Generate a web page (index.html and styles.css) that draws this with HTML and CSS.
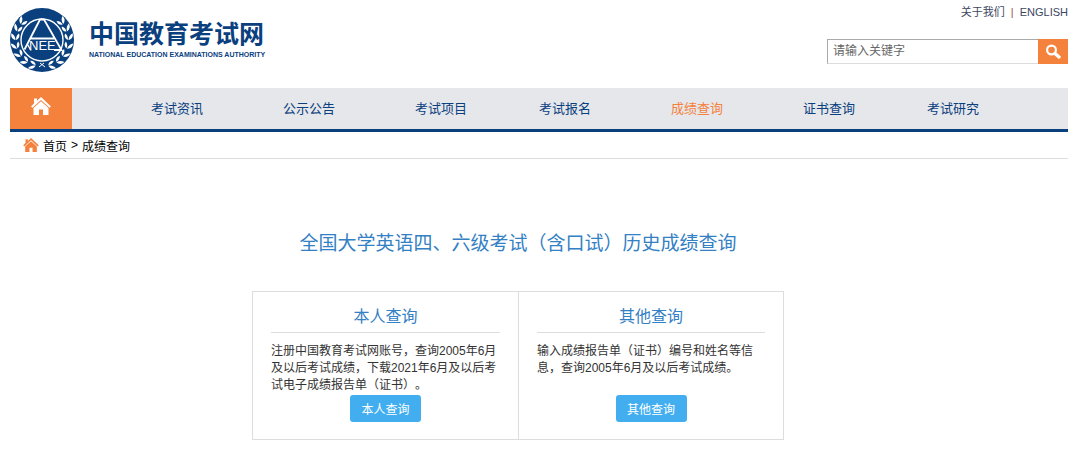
FILE: index.html
```
<!DOCTYPE html>
<html lang="zh-CN">
<head>
    <meta charset="UTF-8">
    <meta name="viewport" content="width=device-width, initial-scale=1.0">
    <title>中国教育考试网 - 成绩查询</title>
    <link rel="stylesheet" href="styles.css">
</head>
<body>

    <header class="header">
        <a class="logo" href="#">
            <svg class="emblem" viewBox="0 0 64 64" aria-hidden="true">
                <defs>
                    <g id="leaf">
                        <path d="M0 0C-3.400 -.8 -4.800 -3.500 -4.200 -6.800C-1.600 -5.400 0 -3 0 0Z"/>
                        <path d="M.6 0C3.600 -1.200 4.600 -3.800 3.400 -6.400C1.200 -4.800 .4 -2.800 .6 0Z"/>
                    </g>
                    <g id="branch" fill="#fff">
                        <use href="#leaf" transform="rotate(14 32 32) translate(32 58.500) rotate(-90)"/>
                        <use href="#leaf" transform="rotate(33 32 32) translate(32 58.500) rotate(-90)"/>
                        <use href="#leaf" transform="rotate(52 32 32) translate(32 58.500) rotate(-90)"/>
                        <use href="#leaf" transform="rotate(71 32 32) translate(32 58.500) rotate(-90)"/>
                        <use href="#leaf" transform="rotate(90 32 32) translate(32 58.500) rotate(-90)"/>
                        <use href="#leaf" transform="rotate(109 32 32) translate(32 58.500) rotate(-90)"/>
                        <use href="#leaf" transform="rotate(127 32 32) translate(32 58.500) rotate(-90)"/>
                    </g>
                </defs>
                <circle cx="32" cy="32" r="32" fill="#0a407e"/>
                <use href="#branch"/>
                <use href="#branch" transform="translate(64 0) scale(-1 1)"/>
                <path d="M29 59l5-4M35 59l-5-4" stroke="#fff" stroke-width="1"/>
                <circle cx="32" cy="32" r="21" fill="#0a407e" stroke="#fff" stroke-width="1.4"/>
                <path d="M14.500 41.500L30 11.500h4L51.500 42H44M20 30.500h24" fill="none" stroke="#fff" stroke-width="1.8"/>
                <path d="M17.500 36.500l3.500 6" stroke="#fff" stroke-width="1.4"/>
                <text class="emblem-text" x="19" y="42">NEE</text>
            </svg>
            <span class="logo-words">
                <span class="logo-name">中国教育考试网</span>
                <span class="logo-sub">NATIONAL EDUCATION EXAMINATIONS AUTHORITY</span>
            </span>
        </a>
        <div class="header-right">
            <div class="top-links">
                <a href="#">关于我们</a>
                <span class="divider">|</span>
                <a href="#">ENGLISH</a>
            </div>
            <form class="search">
                <input type="text" placeholder="请输入关键字" aria-label="请输入关键字">
                <button type="button" aria-label="搜索">
                    <svg viewBox="0 0 16 16" aria-hidden="true">
                        <circle cx="6.500" cy="6" r="4.400" fill="none" stroke="#fff" stroke-width="2.200"/>
                        <path d="M10 9.500l4 3.500" stroke="#fff" stroke-width="3.400" stroke-linecap="round"/>
                    </svg>
                </button>
            </form>
        </div>
    </header>

    <nav class="nav">
        <a class="nav-home" href="#" aria-label="首页">
            <svg viewBox="0 0 20 18" aria-hidden="true">
                <path d="M10 0L6 3.700V1.500H3v5L0 9.400l1.500 1.400L10 3l8.500 7.800L20 9.400z"/>
                <path d="M10 4.200L2.500 11v7H8v-5.500h4V18h5.500v-7z"/>
            </svg>
        </a>
        <ul>
            <li><a href="#">考试资讯</a></li>
            <li><a href="#">公示公告</a></li>
            <li><a href="#">考试项目</a></li>
            <li><a href="#">考试报名</a></li>
            <li><a class="active" href="#">成绩查询</a></li>
            <li><a href="#">证书查询</a></li>
            <li><a href="#">考试研究</a></li>
        </ul>
    </nav>

    <div class="breadcrumb">
        <svg viewBox="0 0 20 18" aria-hidden="true">
            <path d="M10 0L6 3.700V1.500H3v5L0 9.400l1.500 1.400L10 3l8.500 7.800L20 9.400z"/>
            <path d="M10 4.200L2.500 11v7H8v-5.500h4V18h5.500v-7z"/>
        </svg>
        <a href="#">首页</a>
        <span>&gt;</span>
        <a href="#">成绩查询</a>
    </div>

    <main class="main">
        <h1>全国大学英语四、六级考试（含口试）历史成绩查询</h1>
        <div class="panels">
            <section class="panel">
                <h2>本人查询</h2>
                <p>注册中国教育考试网账号，查询2005年6月及以后考试成绩，下载2021年6月及以后考试电子成绩报告单（证书）。</p>
                <button type="button">本人查询</button>
            </section>
            <section class="panel">
                <h2>其他查询</h2>
                <p>输入成绩报告单（证书）编号和姓名等信息，查询2005年6月及以后考试成绩。</p>
                <button type="button">其他查询</button>
            </section>
        </div>
    </main>

</body>
</html>
```
FILE: styles.css
```
* {
    box-sizing: border-box;
}
body {
    margin: 0;
    padding: 0 12px 20px 10px;
    background: #fff;
    color: #333;
    font-family: "Liberation Sans", "Noto Sans CJK SC", sans-serif;
    font-size: 12px;
    text-spacing-trim: space-all;
}
a {
    color: inherit;
    text-decoration: none;
}
h1, h2, p, ul {
    margin: 0;
    padding: 0;
    font-weight: normal;
}
button {
    padding: 0;
    border: none;
    font-family: inherit;
    cursor: pointer;
}

/* header */
.header {
    display: flex;
    justify-content: space-between;
    height: 88px;
}
.logo {
    display: flex;
    align-items: flex-start;
    gap: 15px;
    padding-top: 8px;
    color: #0a407e;
}
.emblem {
    width: 64px;
    height: 64px;
}
.emblem-text {
    fill: #fff;
    font-family: "Liberation Sans", sans-serif;
    font-size: 13px;
}
.logo-words {
    display: flex;
    flex-direction: column;
    padding-top: 11px;
}
.logo-name {
    font-size: 25px;
    font-weight: bold;
    line-height: 30px;
}
.logo-sub {
    font-size: 7px;
    font-weight: bold;
    line-height: 12px;
}
.header-right {
    display: flex;
    flex-direction: column;
    align-items: flex-end;
    gap: 19px;
    padding-top: 4px;
}
.top-links {
    display: flex;
    gap: 6px;
    color: #3c4663;
    font-size: 11px;
    line-height: 16px;
}
.divider {
    color: #a05050;
}
.search {
    display: flex;
    width: 241px;
    height: 25px;
}
.search input {
    flex: 1;
    min-width: 0;
    padding: 0 5px 2px;
    border: 1px solid #ddd;
    border-top-color: #aaa;
    border-left-color: #aaa;
    border-right: none;
    font-family: inherit;
    font-size: 12px;
}
.search input::placeholder {
    color: #666;
}
.search button {
    width: 30px;
    background: #f4813c;
}
.search svg {
    display: block;
    width: 16px;
    height: 16px;
    margin: auto;
}

/* navigation */
.nav {
    display: flex;
    height: 44px;
    background: #e6e7eb;
    border-bottom: 3px solid #0a407e;
}
.nav-home {
    width: 62px;
    padding-top: 9px;
    background: #f4813c;
}
.nav-home svg {
    display: block;
    width: 20px;
    height: 18px;
    margin: 0 auto;
    fill: #fff;
}
.nav ul {
    flex: 1;
    display: grid;
    grid-template-columns: 132fr 132fr 124fr 132fr 132fr 124fr 141fr;
    margin-left: 79px;
    list-style: none;
    color: #0a407e;
    font-size: 13px;
    line-height: 42px;
}
.nav .active {
    color: #f4813c;
}

/* breadcrumb */
.breadcrumb {
    display: flex;
    align-items: center;
    gap: 4px;
    height: 27px;
    padding-left: 13px;
    border-bottom: 1px solid #ddd;
    color: #000;
}
.breadcrumb svg {
    width: 16px;
    height: 14px;
    fill: #f4813c;
}

/* content */
.main {
    padding-right: 42px;
}
.main h1 {
    margin-top: 71px;
    color: #3380c4;
    font-size: 19px;
    line-height: 28px;
    text-align: center;
}
.panels {
    display: grid;
    grid-template-columns: 1fr 1fr;
    max-width: 532px;
    margin: 33px auto 0;
    border: 1px solid #ddd;
}
.panel {
    padding: 10px 18px 17px;
    text-align: center;
}
.panel + .panel {
    border-left: 1px solid #ddd;
}
.panel h2 {
    padding: 2px 0;
    border-bottom: 1px solid #ddd;
    color: #3380c4;
    font-size: 16px;
    line-height: 26px;
}
.panel p {
    min-height: 51px;
    margin: 10px 0 1px;
    padding-right: 2px;
    line-height: 17px;
    text-align: left;
}
.panel button {
    width: 71px;
    height: 27px;
    background: #42aef0;
    border-radius: 3px;
    color: #fff;
    font-size: 12px;
}
```
